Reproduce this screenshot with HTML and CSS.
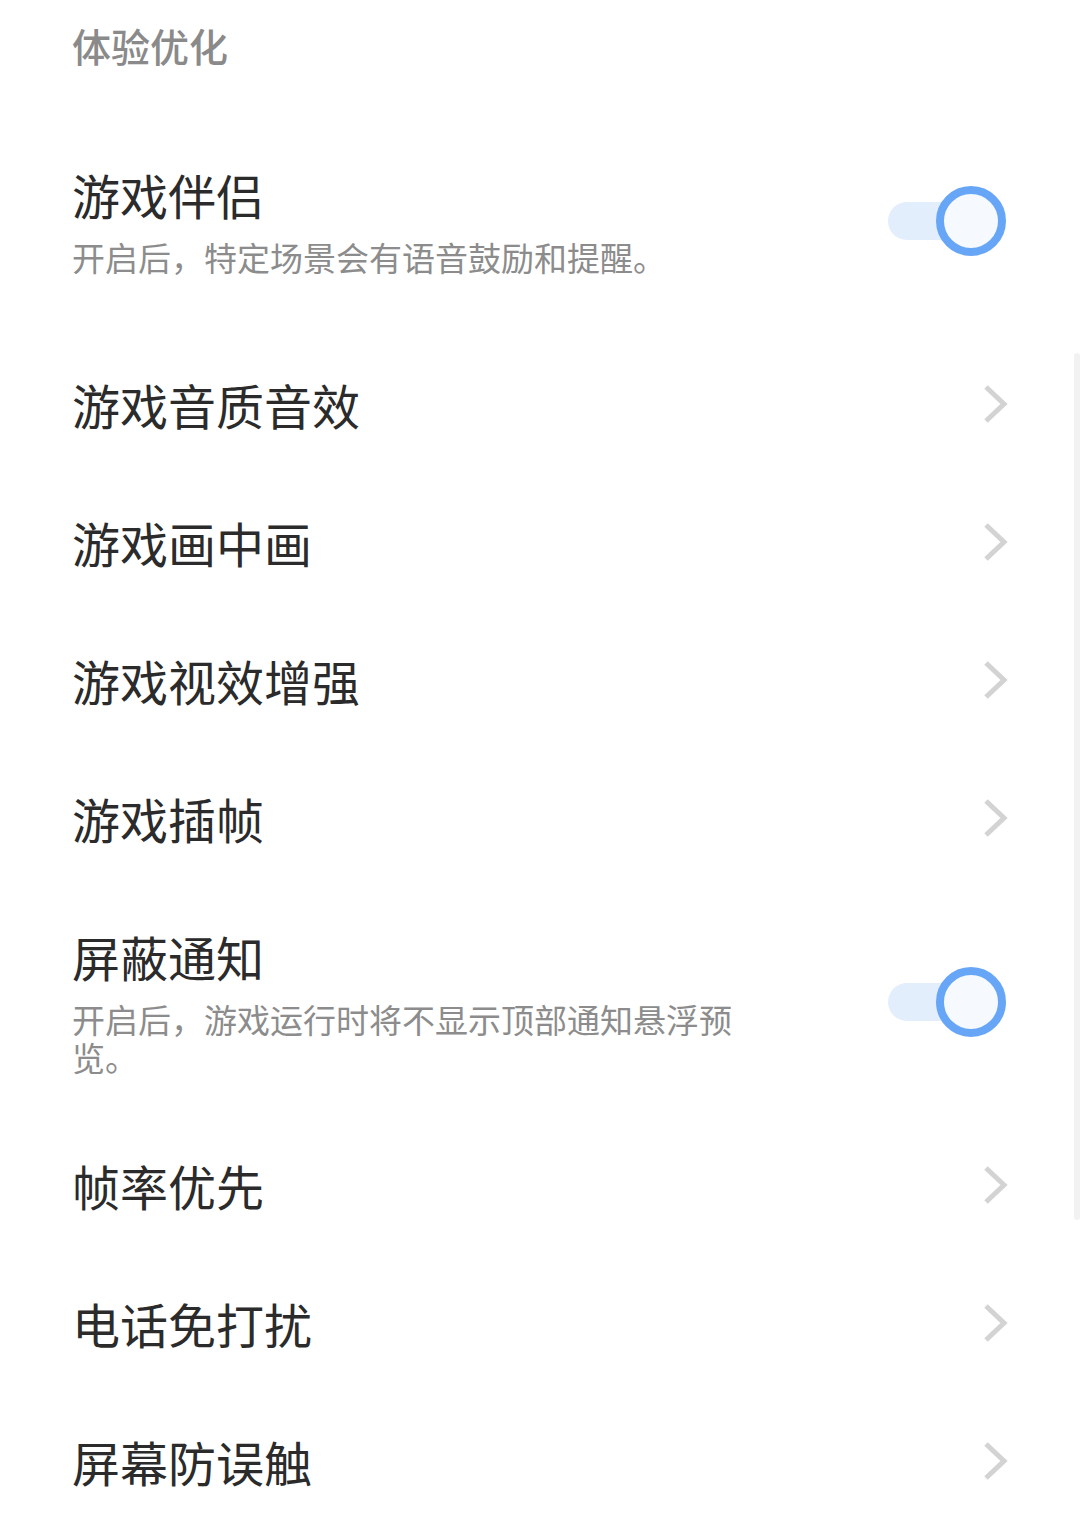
FILE: index.html
```html
<!DOCTYPE html>
<html lang="zh-CN">
<head>
<meta charset="utf-8">
<title>体验优化</title>
<link rel="stylesheet" href="styles.css">
</head>
<body>
<div class="page">
  <div class="section-title">体验优化</div>

  <div class="row row-toggle">
    <div class="texts">
      <div class="title">游戏伴侣</div>
      <div class="sub">开启后，特定场景会有语音鼓励和提醒。</div>
    </div>
    <div class="toggle"><span class="track"></span><span class="knob"></span></div>
  </div>

  <div class="row"><div class="title">游戏音质音效</div><svg class="chev" viewBox="0 0 26 40"><polyline points="4,3 22,20 4,37"/></svg></div>
  <div class="row"><div class="title">游戏画中画</div><svg class="chev" viewBox="0 0 26 40"><polyline points="4,3 22,20 4,37"/></svg></div>
  <div class="row"><div class="title">游戏视效增强</div><svg class="chev" viewBox="0 0 26 40"><polyline points="4,3 22,20 4,37"/></svg></div>
  <div class="row"><div class="title">游戏插帧</div><svg class="chev" viewBox="0 0 26 40"><polyline points="4,3 22,20 4,37"/></svg></div>

  <div class="row row-toggle">
    <div class="texts">
      <div class="title">屏蔽通知</div>
      <div class="sub">开启后，游戏运行时将不显示顶部通知悬浮预览。</div>
    </div>
    <div class="toggle"><span class="track"></span><span class="knob"></span></div>
  </div>

  <div class="row"><div class="title">帧率优先</div><svg class="chev" viewBox="0 0 26 40"><polyline points="4,3 22,20 4,37"/></svg></div>
  <div class="row"><div class="title">电话免打扰</div><svg class="chev" viewBox="0 0 26 40"><polyline points="4,3 22,20 4,37"/></svg></div>
  <div class="row"><div class="title">屏幕防误触</div><svg class="chev" viewBox="0 0 26 40"><polyline points="4,3 22,20 4,37"/></svg></div>

  <div class="scrollbar"></div>
</div>
</body>
</html>
```

FILE: styles.css
```css
html, body {
  margin: 0;
  padding: 0;
  background: #ffffff;
}
body {
  font-family: "Noto Sans CJK SC", "Noto Sans", sans-serif;
}
.page {
  position: relative;
  width: 1080px;
  height: 1520px;
  overflow: hidden;
}
.section-title {
  height: 106px;
  line-height: 90px;
  padding-left: 72px;
  font-size: 39px;
  color: #8a8a8a;
  font-weight: 500;
}
.row {
  display: flex;
  align-items: center;
  justify-content: space-between;
  height: 138px;
  padding: 0 74px 0 72px;
  box-sizing: border-box;
}
.row-toggle {
  height: 229px;
}
.texts {
  display: flex;
  flex-direction: column;
  gap: 16px;
}
.title {
  font-size: 48px;
  line-height: 56px;
  color: #2b2b2b;
}
.sub {
  font-size: 33px;
  line-height: 38px;
  color: #8c8c8c;
  max-width: 680px;
}
.chev {
  width: 26px;
  height: 40px;
  margin-right: -2px;
}
.chev polyline {
  fill: none;
  stroke: #d3d3d3;
  stroke-width: 5;
}
.toggle {
  position: relative;
  width: 118px;
  height: 70px;
  flex-shrink: 0;
}
.track {
  position: absolute;
  left: 0;
  top: 16px;
  width: 100px;
  height: 38px;
  border-radius: 19px;
  background: #e3eefd;
}
.knob {
  position: absolute;
  right: 0;
  top: 0;
  width: 70px;
  height: 70px;
  box-sizing: border-box;
  border: 8px solid #67a6f7;
  border-radius: 50%;
  background: #f6faff;
}
.scrollbar {
  position: absolute;
  right: 0;
  top: 353px;
  width: 6px;
  height: 867px;
  border-radius: 3px;
  background: #f2f2f2;
}
```
